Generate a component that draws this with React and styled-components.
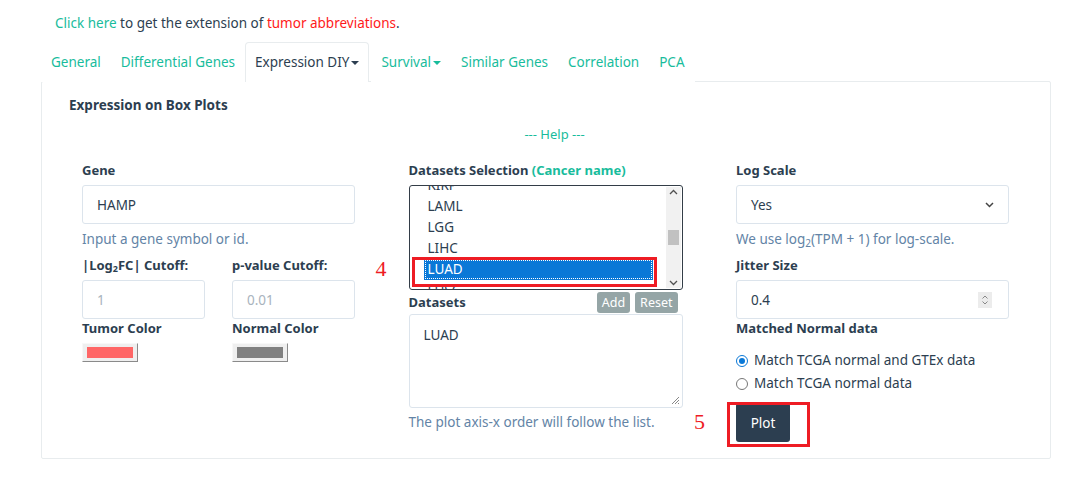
import React from "react";
import styled, { createGlobalStyle } from "styled-components";

const GlobalStyle = createGlobalStyle`
  body {
    margin: 0;
    background: #fff;
    font-family: "Noto Sans", "Open Sans", sans-serif;
    color: #2c3e50;
  }
  sub {
    line-height: 0;
    vertical-align: -0.25em;
  }
`;

const Page = styled.div`
  width: 1010px;
  padding-left: 41px;
`;

const TopLine = styled.p`
  margin: 0;
  padding: 13px 0 0 14px;
  height: 29px;
  font-size: 13.5px;
  line-height: 20px;
  color: #2c3e50;
`;

const Link = styled.span`
  color: ${(p) => (p.$red ? "#ff1a1a" : "#18bc9c")};
`;

const Tabs = styled.ul`
  display: flex;
  margin: 0;
  padding: 0;
  list-style: none;
  height: 39px;
`;

const Tab = styled.li`
  padding: 9px 9px 0 9px;
  margin-right: ${(p) => (p.$active ? "2px" : "0")};
  font-size: 13.5px;
  line-height: 20px;
  color: ${(p) => (p.$active ? "#2c3e50" : "#18bc9c")};
  border: 1px solid ${(p) => (p.$active ? "#e8ecee" : "transparent")};
  border-bottom: none;
  border-radius: 4px 4px 0 0;
  background: #fff;
  position: relative;
  z-index: 1;
  height: 40px;
  box-sizing: border-box;
  margin-bottom: -1px;
`;

const Caret = styled.span`
  display: inline-block;
  width: 0;
  height: 0;
  margin-left: 2px;
  vertical-align: middle;
  border-top: 4px solid currentColor;
  border-left: 4px solid transparent;
  border-right: 4px solid transparent;
`;

const Panel = styled.div`
  border: 1px solid #e8ecee;
  border-radius: 2px;
  padding: 13px 0 14px 27px;
  box-sizing: border-box;
  height: 378px;
`;

const PanelTitle = styled.h4`
  margin: 0;
  font-size: 13.5px;
  font-weight: 700;
  line-height: 20px;
  color: #2c3e50;
`;

const HelpLink = styled.div`
  text-align: center;
  color: #18bc9c;
  font-size: 13px;
  line-height: 20px;
  margin: 9px 0 0 0;
  padding-right: 10px;
`;

const Columns = styled.div`
  display: grid;
  grid-template-columns: 273px 274px 273px;
  column-gap: 53.5px;
  padding-left: 13px;
  margin-top: 17px;
`;

const Column = styled.div`
  display: flex;
  flex-direction: column;
  position: relative;
`;

const Label = styled.label`
  display: block;
  font-size: 13px;
  font-weight: 700;
  line-height: 19px;
  color: #2c3e50;
  margin-top: ${(p) => p.$mt || "0"};
  margin-bottom: ${(p) => p.$mb || "0"};
`;

const Note = styled.span`
  color: #18bc9c;
`;

const TextInput = styled.div`
  box-sizing: border-box;
  height: ${(p) => p.$h || "39px"};
  border: 1px solid #dce4ec;
  border-radius: 3px;
  padding: 0 ${(p) => p.$pr || "14px"} 0 14px;
  display: flex;
  align-items: center;
  justify-content: space-between;
  font-size: 13.5px;
  color: ${(p) => (p.$muted ? "#a9b3bd" : "#2c3e50")};
  background: #fff;
`;

const HelpText = styled.div`
  font-size: 13.5px;
  line-height: 20px;
  color: #6384a6;
  margin-top: ${(p) => p.$mt || "5px"};
`;

const Pair = styled.div`
  display: grid;
  grid-template-columns: 123px 123px;
  column-gap: 27px;
  margin-top: ${(p) => p.$mt || "0"};
`;

const Swatch = styled.div`
  box-sizing: border-box;
  width: 56px;
  height: 19px;
  margin-top: 5px;
  background: #efefef;
  border: 1px solid;
  border-color: #f8f8f8 #8a8a8a #8a8a8a #f8f8f8;
  padding: 3px 4px;
  & > div {
    width: 100%;
    height: 100%;
    background: ${(p) => p.$color};
  }
`;

const Listbox = styled.div`
  position: relative;
  box-sizing: border-box;
  height: 105px;
  border: 1px solid #333d47;
  border-radius: 3px;
  display: flex;
  overflow: hidden;
  margin-top: 5px;
`;

const Options = styled.div`
  flex: 1;
  margin-top: -11px;
  padding: 0 13px 0 14px;
`;

const Option = styled.div`
  height: 21px;
  line-height: 21px;
  font-size: 13.5px;
  padding-left: 4px;
  color: ${(p) => (p.$selected ? "#fff" : "#2c3e50")};
  background: ${(p) => (p.$selected ? "#0a78d7" : "transparent")};
  outline: ${(p) => (p.$selected ? "1px dotted #fff" : "none")};
  outline-offset: -2px;
`;

const Scrollbar = styled.div`
  width: 15px;
  margin: 1px 1px 1px 0;
  display: flex;
  flex-direction: column;
  align-items: center;
  justify-content: space-between;
  background: #f1f1f1;
  position: relative;
`;

const Thumb = styled.div`
  position: absolute;
  left: 2px;
  right: 2px;
  top: 43px;
  height: 15px;
  background: #c1c1c1;
`;

const Annot = styled.div`
  position: absolute;
  border: 3px solid #ee1c24;
  box-sizing: border-box;
  left: ${(p) => p.$l}px;
  top: ${(p) => p.$t}px;
  width: ${(p) => p.$w}px;
  height: ${(p) => p.$h}px;
  pointer-events: none;
`;

const AnnotNum = styled.span`
  position: absolute;
  left: ${(p) => p.$l}px;
  top: ${(p) => p.$t}px;
  font-family: "Liberation Serif", "DejaVu Serif", serif;
  font-size: 22px;
  color: #ee1c24;
  line-height: 22px;
`;

const DatasetsHead = styled.div`
  display: flex;
  align-items: center;
  justify-content: space-between;
  height: 24px;
  padding-right: 5px;
`;

const SmallButtons = styled.div`
  display: flex;
  gap: 5px;
`;

const SmallButton = styled.button`
  font-family: inherit;
  font-size: 12.5px;
  line-height: 21px;
  padding: 0 5px;
  border: none;
  border-radius: 3px;
  background: #95a5a6;
  color: #fff;
`;

const TextArea = styled.div`
  position: relative;
  box-sizing: border-box;
  height: 94px;
  border: 1px solid #dce4ec;
  border-radius: 3px;
  padding: 10px 14px;
  font-size: 13.5px;
  line-height: 20px;
`;

const Grip = styled.svg`
  position: absolute;
  right: 2px;
  bottom: 2px;
`;

const RadioRow = styled.label`
  display: flex;
  align-items: center;
  gap: 6px;
  font-size: 13.5px;
  line-height: 23px;
  color: #2c3e50;
`;

const Radio = styled.span`
  box-sizing: border-box;
  width: 12px;
  height: 12px;
  border-radius: 50%;
  border: ${(p) => (p.$checked ? "1.5px solid #0a78d7" : "1.5px solid #777")};
  display: flex;
  align-items: center;
  justify-content: center;
  &::after {
    content: "";
    width: 6px;
    height: 6px;
    border-radius: 50%;
    background: ${(p) => (p.$checked ? "#0a78d7" : "transparent")};
  }
`;

const PlotWrap = styled.div`
  position: relative;
  margin-top: 8px;
  height: 40px;
`;

const PlotButton = styled.button`
  font-family: inherit;
  font-size: 13.5px;
  height: 39px;
  width: 54px;
  border: none;
  border-radius: 3px;
  background: #2c3e50;
  color: #fff;
`;

const Spinner = styled.div`
  width: 14px;
  height: 16px;
  background: #ececec;
  display: flex;
  align-items: center;
  justify-content: center;
`;

const Chevron = () => (
  <svg width="9" height="6" viewBox="0 0 9 6">
    <path d="M1 1l3.5 3.5L8 1" fill="none" stroke="#444" strokeWidth="1.5" />
  </svg>
);

export default function App() {
  const options = ["KIRP", "LAML", "LGG", "LIHC", "LUAD", "LUSC"];
  return (
    <Page>
      <GlobalStyle />
      <TopLine>
        <Link>Click here</Link> to get the extension of{" "}
        <Link $red>tumor abbreviations</Link>.
      </TopLine>
      <Tabs>
        <Tab>General</Tab>
        <Tab>Differential Genes</Tab>
        <Tab $active>
          Expression DIY
          <Caret />
        </Tab>
        <Tab>
          Survival
          <Caret />
        </Tab>
        <Tab>Similar Genes</Tab>
        <Tab>Correlation</Tab>
        <Tab>PCA</Tab>
      </Tabs>
      <Panel>
        <PanelTitle>Expression on Box Plots</PanelTitle>
        <HelpLink>--- Help ---</HelpLink>
        <Columns>
          <Column>
            <Label $mb="5px">Gene</Label>
            <TextInput>HAMP</TextInput>
            <HelpText>Input a gene symbol or id.</HelpText>
            <Pair $mt="7px">
              <Label $mb="5px">
                |Log<sub style={{ fontSize: 9 }}>2</sub>FC| Cutoff:
              </Label>
              <Label $mb="5px">p-value Cutoff:</Label>
              <TextInput $muted>1</TextInput>
              <TextInput $muted>0.01</TextInput>
            </Pair>
            <Pair>
              <Label>Tumor Color</Label>
              <Label>Normal Color</Label>
              <Swatch $color="#ff6666">
                <div />
              </Swatch>
              <Swatch $color="#808080">
                <div />
              </Swatch>
            </Pair>
          </Column>

          <Column>
            <Label>
              Datasets Selection <Note>(Cancer name)</Note>
            </Label>
            <Listbox>
              <Options>
                {options.map((o) => (
                  <Option key={o} $selected={o === "LUAD"}>
                    {o}
                  </Option>
                ))}
              </Options>
              <Scrollbar>
                <svg width="9" height="12" viewBox="0 0 9 12">
                  <path d="M1 7l3.5-3.5L8 7" fill="none" stroke="#505050" strokeWidth="1.3" />
                </svg>
                <Thumb />
                <svg width="9" height="12" viewBox="0 0 9 12">
                  <path d="M1 5l3.5 3.5L8 5" fill="none" stroke="#505050" strokeWidth="1.3" />
                </svg>
              </Scrollbar>
              <Annot $l={2} $t={71} $w={245} $h={30} />
            </Listbox>
            <AnnotNum $l={-33} $t={97}>4</AnnotNum>
            <DatasetsHead>
              <Label>Datasets</Label>
              <SmallButtons>
                <SmallButton>Add</SmallButton>
                <SmallButton>Reset</SmallButton>
              </SmallButtons>
            </DatasetsHead>
            <TextArea>
              LUAD
              <Grip width="10" height="10" viewBox="0 0 10 10">
                <path d="M9 2L2 9M9 5L5 9M9 8L8 9" stroke="#888" strokeWidth="1" />
              </Grip>
            </TextArea>
            <HelpText $mt="4px">The plot axis-x order will follow the list.</HelpText>
          </Column>

          <Column>
            <Label $mb="5px">Log Scale</Label>
            <TextInput>
              Yes
              <Chevron />
            </TextInput>
            <HelpText>
              We use log<sub style={{ fontSize: 10 }}>2</sub>(TPM + 1) for log-scale.
            </HelpText>
            <Label $mt="7px" $mb="5px">
              Jitter Size
            </Label>
            <TextInput $pr="16px">
              0.4
              <Spinner>
                <svg width="8" height="12" viewBox="0 0 8 12">
                  <path d="M1.5 4.5L4 2l2.5 2.5M1.5 7.5L4 10l2.5-2.5" fill="none" stroke="#888" strokeWidth="1" />
                </svg>
              </Spinner>
            </TextInput>
            <Label $mb="11px">Matched Normal data</Label>
            <RadioRow>
              <Radio $checked />
              Match TCGA normal and GTEx data
            </RadioRow>
            <RadioRow>
              <Radio />
              Match TCGA normal data
            </RadioRow>
            <PlotWrap>
              <PlotButton>Plot</PlotButton>
              <Annot $l={-9} $t={-1} $w={83} $h={45} />
              <AnnotNum $l={-42} $t={8}>5</AnnotNum>
            </PlotWrap>
          </Column>
        </Columns>
      </Panel>
    </Page>
  );
}
